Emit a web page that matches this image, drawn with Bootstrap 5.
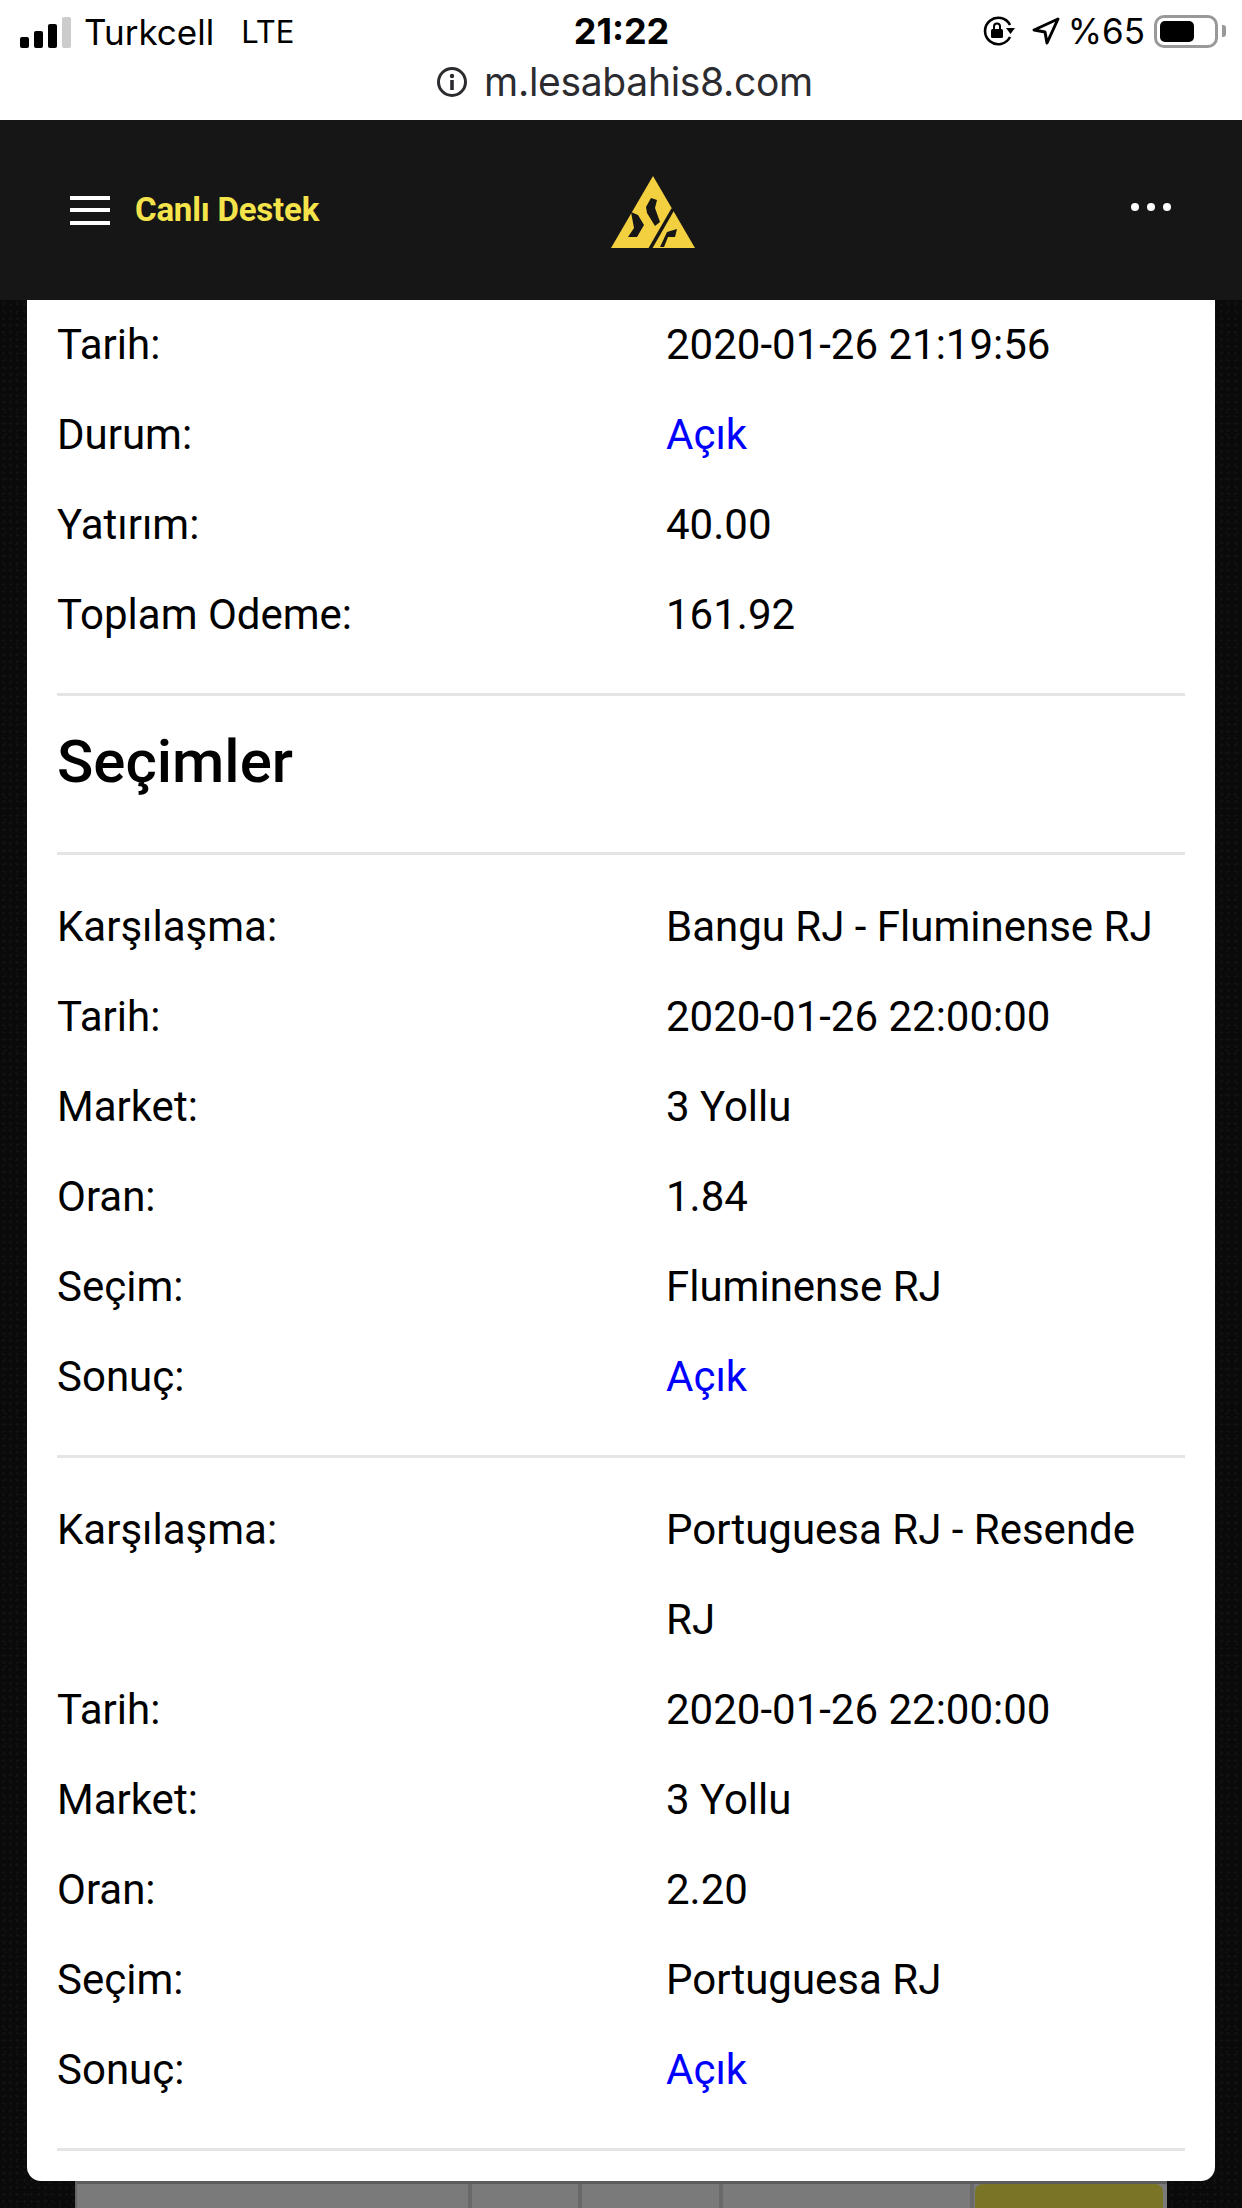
<!DOCTYPE html>
<html lang="tr">

<head>
  <meta charset="UTF-8">
  <meta name="viewport" content="width=device-width, initial-scale=1.0">
  <title>Kupon Detayı</title>
  <link rel="stylesheet" href="https://cdn.jsdelivr.net/npm/bootstrap@5.3.0/dist/css/bootstrap.min.css">
  <script src="https://cdn.jsdelivr.net/npm/bootstrap@5.3.0/dist/js/bootstrap.bundle.min.js"></script>
  <style>
    body {
      height: 2208px;
      overflow: hidden;
      font-family: Roboto, sans-serif;
      background-color: #0a0a0a;
      background-image: radial-gradient(#131313 1px, transparent 1.5px), radial-gradient(#101010 1px, transparent 1.5px);
      background-size: 7px 7px, 11px 11px;
    }

    .phone-top {
      height: 120px;
      background: #fff;
      font-family: Inter, "Liberation Sans", sans-serif;
    }

    .status-row {
      height: 60px;
      padding: 11px 16px 0 20px;
      font-size: 35px;
      line-height: 40px;
      color: #000;
    }

    .status-left, .status-right { flex: 1 1 0; }
    .status-time { font-weight: 700; font-size: 36px; margin-left: -3px; }

    .signal { height: 31px; gap: 5px; margin-right: 13px; }
    .signal i { display: block; width: 9px; border-radius: 2px; background: #000; }
    .signal i:nth-child(1) { height: 11px; }
    .signal i:nth-child(2) { height: 17px; }
    .signal i:nth-child(3) { height: 24px; }
    .signal i:nth-child(4) { height: 31px; background: #ccc; }

    .carrier-lte { margin-left: 27px; font-size: 31px; line-height: 42px; }

    .battery {
      width: 64px;
      height: 33px;
      border: 3px solid #999;
      border-radius: 10px;
      padding: 3px;
      margin-left: 9px;
    }

    .battery i { display: block; width: 34px; height: 100%; border-radius: 5px; background: #000; }
    .battery-nub { width: 4px; height: 12px; margin-left: 4px; background: #999; border-radius: 0 3px 3px 0; }

    .url-row { height: 60px; font-size: 39px; letter-spacing: -.3px; color: #2c2c30; padding: 0 0 16px 7px; }

    .site-nav {
      height: 180px;
      padding: 0 71px 0 70px;
      background: #161616;
    }

    .nav-left { width: 541px; }
    .burger { width: 40px; margin-right: 25px; }
    .burger i { display: block; height: 4px; background: #fff; margin: 8.5px 0; }
    .live-link { font-size: 33px; font-weight: 700; letter-spacing: -.2px; color: #f5e34b; text-decoration: none; }

    .site-logo { filter: blur(.7px); }

    .nav-dots { gap: 8px; margin-bottom: 6px; }
    .nav-dots i { display: block; width: 8px; height: 8px; border-radius: 50%; background: #fff; }

    .bet-panel {
      width: 1188px;
      margin-left: 27px;
      padding: 0 30px 30px;
      border: 0;
      border-radius: 0 0 14px 14px;
      color: #000;
      font-size: 42px;
      line-height: 90px;
    }

    .bet-label { width: 609px; flex: none; }
    .bet-open { color: #00f; }

    .bet-rule {
      margin: 33px 0 27px;
      border-top: 3px solid #e5e5e5;
      opacity: 1;
    }

    .bet-rule-head { margin-bottom: 21px; }

    .bet-title {
      margin: 0 0 45px;
      font-size: 60px;
      font-weight: 500;
      line-height: 90px;
    }

    .under-table {
      width: 1092px;
      height: 27px;
      margin-left: 75px;
      background: #7a7a7a;
      border-top: 3px solid #5c5c5c;
      border-left: 2px solid #666;
    }

    .under-cell { border-right: 4px solid #696969; }
    .under-btn { width: 188px; margin: 0 4px 0 1px; background: #7a7427; border-radius: 8px 8px 0 0; }
  </style>
</head>

<body>
  <div class="phone-top">
    <div class="status-row d-flex align-items-start">
      <div class="status-left d-flex align-items-center">
        <div class="signal d-flex align-items-end"><i></i><i></i><i></i><i></i></div>
        <span>Turkcell</span><span class="carrier-lte">LTE</span>
      </div>
      <div class="status-time">21:22</div>
      <div class="status-right d-flex align-items-center justify-content-end">
        <svg width="34" height="30" viewBox="0 0 34 30" class="me-3">
          <path d="M28 9A13.2 13.2 0 1 0 28 21" fill="none" stroke="#000" stroke-width="2.6"/>
          <path d="M24 12h9l-4.500 6z" fill="#000"/>
          <rect x="9" y="13" width="12" height="9" rx="1.500" fill="#000"/>
          <path d="M12 13v-2.500a3 3 0 0 1 6 0V13" fill="none" stroke="#000" stroke-width="2"/>
        </svg>
        <svg width="28" height="28" viewBox="0 0 28 28" class="me-2">
          <path d="M26 2 2 13l11 2 2 11z" fill="none" stroke="#000" stroke-width="3" stroke-linejoin="round"/>
        </svg>
        <span>%65</span>
        <div class="battery"><i></i></div>
        <div class="battery-nub"></div>
      </div>
    </div>
    <div class="url-row d-flex align-items-center justify-content-center">
      <svg width="32" height="32" viewBox="0 0 32 32" class="me-3">
        <circle cx="16" cy="16" r="13.500" fill="none" stroke="#2c2c30" stroke-width="3"/>
        <rect x="14.200" y="14" width="3.600" height="10" fill="#2c2c30"/>
        <circle cx="16" cy="10" r="2.200" fill="#2c2c30"/>
      </svg>
      <span>m.lesabahis8.com</span>
    </div>
  </div>

  <nav class="site-nav d-flex align-items-center">
    <div class="nav-left d-flex align-items-center">
      <div class="burger"><i></i><i></i><i></i></div>
      <a href="#" class="live-link">Canlı Destek</a>
    </div>
    <svg width="84" height="72" viewBox="0 0 84 72" class="site-logo mt-1">
      <path d="M42 0 84 72H0z" fill="#f2d03f"/>
      <!-- dark cuts of the S and the A -->
      <path d="M62 33 39 73" fill="none" stroke="#161616" stroke-width="3.500"/>
      <path d="M40 22 46 24 44 32 49 46 44 50 36 37 35 31z" fill="#161616"/>
      <path d="M20 36 27 39 33 49 26 61H17L23 52z" fill="#161616"/>
      <path d="M56 56 66 53 64 61H57L53 71H49z" fill="#161616"/>
    </svg>
    <div class="nav-dots d-flex ms-auto"><i></i><i></i><i></i></div>
  </nav>

  <div class="card bet-panel">
    <div class="d-flex"><div class="bet-label">Tarih:</div><div>2020-01-26 21:19:56</div></div>
    <div class="d-flex"><div class="bet-label">Durum:</div><div class="bet-open">Açık</div></div>
    <div class="d-flex"><div class="bet-label">Yatırım:</div><div>40.00</div></div>
    <div class="d-flex"><div class="bet-label">Toplam Odeme:</div><div>161.92</div></div>
    <hr class="bet-rule bet-rule-head">
    <h3 class="bet-title">Seçimler</h3>
    <hr class="bet-rule mt-0">
    <div class="d-flex"><div class="bet-label">Karşılaşma:</div><div>Bangu RJ - Fluminense RJ</div></div>
    <div class="d-flex"><div class="bet-label">Tarih:</div><div>2020-01-26 22:00:00</div></div>
    <div class="d-flex"><div class="bet-label">Market:</div><div>3 Yollu</div></div>
    <div class="d-flex"><div class="bet-label">Oran:</div><div>1.84</div></div>
    <div class="d-flex"><div class="bet-label">Seçim:</div><div>Fluminense RJ</div></div>
    <div class="d-flex"><div class="bet-label">Sonuç:</div><div class="bet-open">Açık</div></div>
    <hr class="bet-rule">
    <div class="d-flex"><div class="bet-label">Karşılaşma:</div><div>Portuguesa RJ - Resende RJ</div></div>
    <div class="d-flex"><div class="bet-label">Tarih:</div><div>2020-01-26 22:00:00</div></div>
    <div class="d-flex"><div class="bet-label">Market:</div><div>3 Yollu</div></div>
    <div class="d-flex"><div class="bet-label">Oran:</div><div>2.20</div></div>
    <div class="d-flex"><div class="bet-label">Seçim:</div><div>Portuguesa RJ</div></div>
    <div class="d-flex"><div class="bet-label">Sonuç:</div><div class="bet-open">Açık</div></div>
    <hr class="bet-rule mb-0">
  </div>

  <div class="under-table d-flex">
    <div class="under-cell" style="width: 395px"></div>
    <div class="under-cell" style="width: 110px"></div>
    <div class="under-cell" style="width: 141px"></div>
    <div class="under-cell" style="width: 251px"></div>
    <div class="under-btn"></div>
  </div>
</body>

</html>
